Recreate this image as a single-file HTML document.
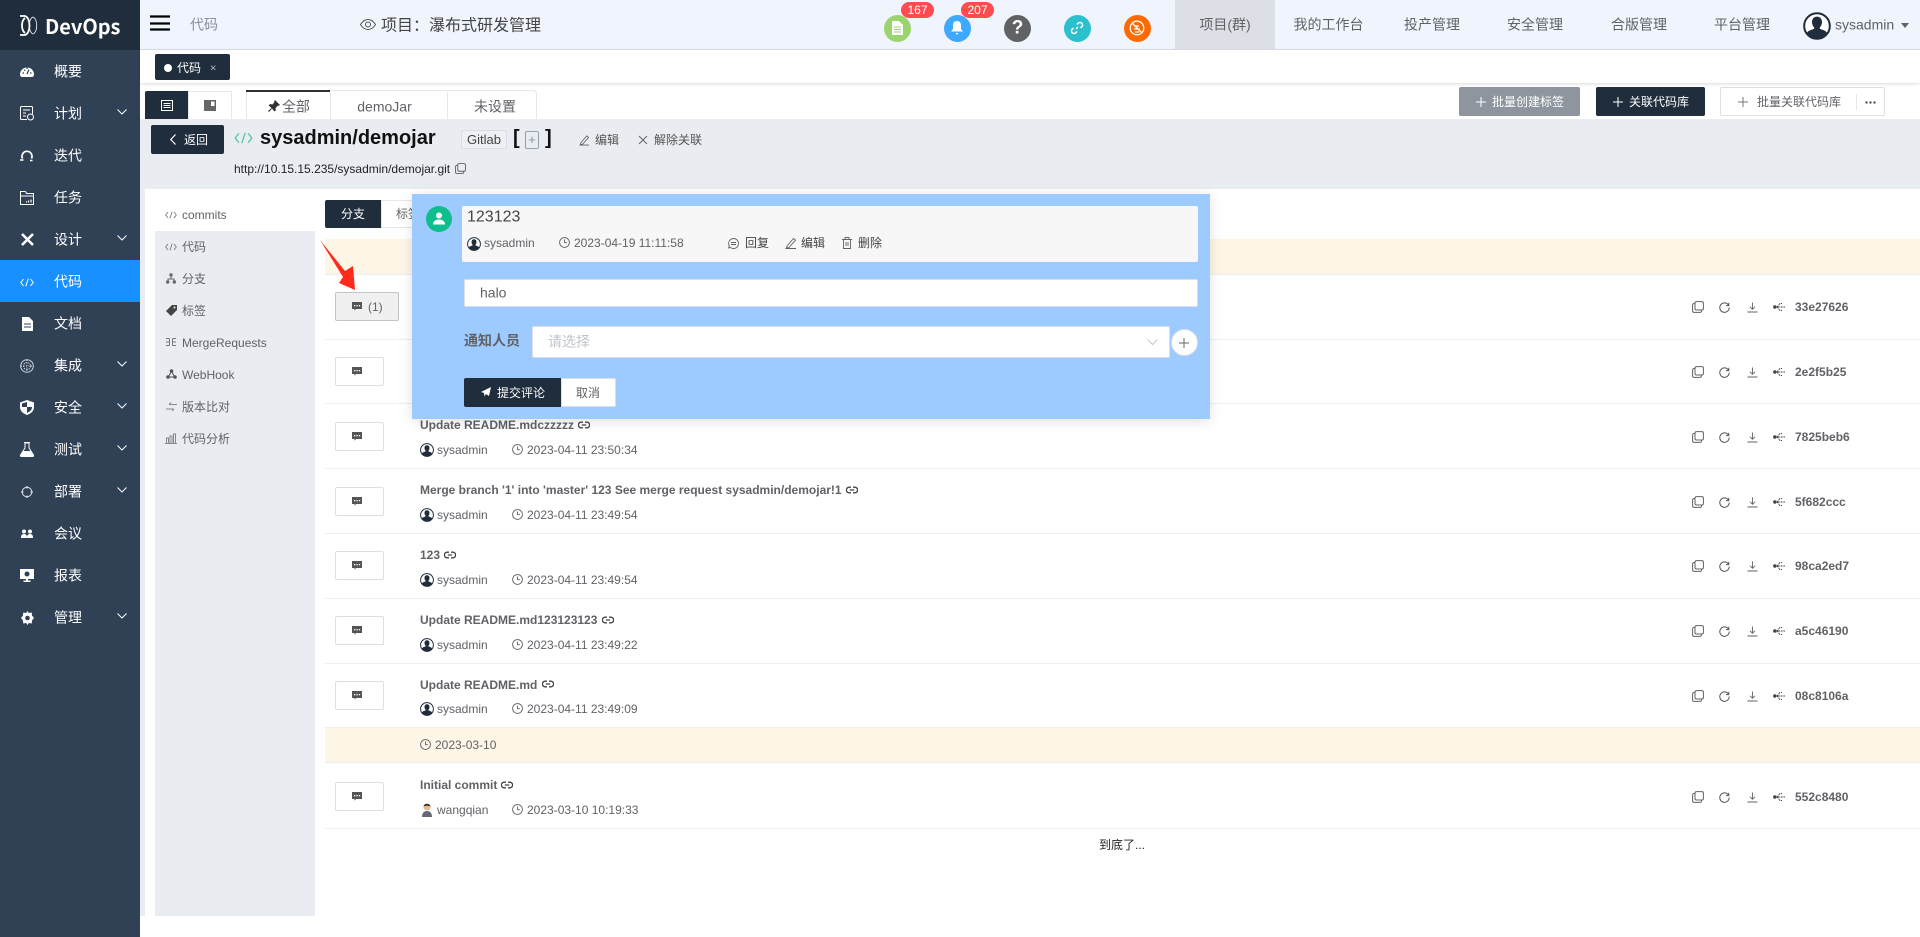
<!DOCTYPE html>
<html lang="zh"><head><meta charset="utf-8"><title>DevOps</title>
<style>
*{box-sizing:border-box}
html,body{margin:0;padding:0;width:1920px;height:937px;overflow:hidden;background:#fff;font-family:"Liberation Sans","Noto Sans CJK SC",sans-serif;font-size:12px;color:#606266}
.a{position:absolute}
.t{position:absolute;white-space:nowrap;transform:translateY(-50%);line-height:1.2}
.c{transform:translate(-50%,-50%);text-align:center}
svg{position:absolute;overflow:visible}
.n{color:#fff;font-size:14px;left:54px}
.m{color:#606266;font-size:12px;left:182px}
.b{font-weight:bold;color:#606266;font-size:12px}
.nav{font-size:14px;color:#606266}
.cb{position:absolute;left:335px;width:49px;height:29px;background:#fff;border:1px solid #dcdfe6;border-radius:2px}
.line{position:absolute;left:325px;width:1595px;height:1px;background:#ebeef5}
.badge{position:absolute;height:16px;border-radius:8px;background:#ff4d4f;color:#fff;font-size:12px;text-align:center;line-height:16px;top:2px;width:33px}
.circ{position:absolute;width:27px;height:27px;border-radius:50%;top:15px}
</style></head><body>
<svg width="0" height="0" style="position:absolute">
<defs>
<symbol id="av" viewBox="0 0 14 14"><circle cx="7" cy="7" r="6.400" fill="#fff" stroke="#1f2d3d" stroke-width="1"/><path d="M7 2.300c1.500 0 2.500 1.100 2.500 2.700 0 1.100-.5 2.200-1.100 2.700v.7c1.100.5 3 .8 3.700 2.100A6.400 6.400 0 0 1 7 13.500a6.400 6.400 0 0 1-5.100-3c.7-1.300 2.600-1.600 3.700-2.100v-.7c-.6-.5-1.100-1.600-1.100-2.700 0-1.600 1-2.700 2.500-2.700z" fill="#1f2d3d"/></symbol>
<symbol id="ck" viewBox="0 0 11 11"><circle cx="5.500" cy="5.500" r="4.900" fill="none" stroke="#606266" stroke-width=".9"/><path d="M5.500 2.500v3.200h2.400" fill="none" stroke="#606266" stroke-width=".9"/></symbol>
<symbol id="lk" viewBox="0 0 12 8"><path d="M5 1.200H3.200a2.800 2.800 0 0 0 0 5.600H5M7 1.200h1.800a2.800 2.800 0 0 1 0 5.600H7M3.800 4h4.400" fill="none" stroke="#444" stroke-width="1.300"/></symbol>
<symbol id="cm" viewBox="0 0 10 9"><path d="M0 0h10v7H4L2.500 8.800V7H0z" fill="#555"/><rect x="2" y="3" width="1.300" height="1.300" fill="#fff"/><rect x="4.400" y="3" width="1.300" height="1.300" fill="#fff"/><rect x="6.800" y="3" width="1.300" height="1.300" fill="#fff"/></symbol>
<symbol id="cp" viewBox="0 0 12 12"><rect x="3" y=".6" width="8.400" height="8.400" rx="1.500" fill="none" stroke="#606266"/><path d="M3 2.500H2A1.400 1.400 0 0 0 .6 4v6A1.400 1.400 0 0 0 2 11.400h6A1.400 1.400 0 0 0 9.500 10V9" fill="none" stroke="#606266"/></symbol>
<symbol id="rf" viewBox="0 0 11 11"><path d="M9.400 3A4.700 4.700 0 1 0 10.200 5.500" fill="none" stroke="#555" stroke-width="1"/><path d="M9.800.8v2.800H7" fill="none" stroke="#555" stroke-width="1"/></symbol>
<symbol id="dl" viewBox="0 0 11 11"><path d="M5.500.5v6.500M3 4.800 5.500 7.300 8 4.800M.5 10h10" fill="none" stroke="#606266" stroke-width=".9"/></symbol>
<symbol id="tr" viewBox="0 0 12 10"><circle cx="1.800" cy="5" r="1.700" fill="#444"/><path d="M2 5h10M4 5l3-3.500h2M4 5l3 3.500h2" fill="none" stroke="#444" stroke-width=".9" stroke-dasharray="2 .8"/></symbol>
<symbol id="pen" viewBox="0 0 12 12"><path d="M2 9 8.500 1.500l2 1.700L4 10.500l-2.500.5zM.5 11.500H11" fill="none" stroke="#606266" stroke-width=".9"/></symbol>
<symbol id="code" viewBox="0 0 14 9"><path d="M3.500 1 .8 4.500l2.700 3.500M10.500 1l2.700 3.500-2.700 3.500M8.300 .6 5.700 8.400" fill="none" stroke="currentColor" stroke-width="1"/></symbol>
<symbol id="chev" viewBox="0 0 10 6"><path d="M.5.500 5 5 9.500.5" fill="none" stroke="#fff" stroke-width="1"/></symbol>
</defs></svg>

<!-- sidebar -->
<div class="a" style="left:0;top:0;width:140px;height:937px;background:#304156"></div>
<div class="a" style="left:0;top:0;width:140px;height:50px;background:#1f2d3d"></div>
<svg style="left:20px;top:15px" width="18" height="21" viewBox="0 0 18 21"><path d="M0 1h5c6 2 6 17 0 19H0M5 3c-4 3-4 12 0 15" fill="none" stroke="#fff" stroke-width="1.800"/><path d="M13 2c5 2 5 15 0 17M13 2C8 4 8 17 13 19" fill="none" stroke="#fff" stroke-width=".8"/></svg>
<div class="t" style="left:45px;top:26px;color:#fff;font-size:20px;font-weight:bold;font-family:'Noto Sans CJK SC','Liberation Sans',sans-serif">DevOps</div>
<div class="a" style="left:0;top:260px;width:140px;height:42px;background:#1890ff"></div>
<div class="t n" style="top:72px">概要</div><div class="t n" style="top:114px">计划</div><div class="t n" style="top:156px">迭代</div><div class="t n" style="top:198px">任务</div><div class="t n" style="top:240px">设计</div><div class="t n" style="top:282px">代码</div><div class="t n" style="top:324px">文档</div><div class="t n" style="top:366px">集成</div><div class="t n" style="top:408px">安全</div><div class="t n" style="top:450px">测试</div><div class="t n" style="top:492px">部署</div><div class="t n" style="top:534px">会议</div><div class="t n" style="top:576px">报表</div><div class="t n" style="top:618px">管理</div>
<svg style="left:117px;top:109px" width="10" height="6"><use href="#chev"/></svg>
<svg style="left:117px;top:235px" width="10" height="6"><use href="#chev"/></svg>
<svg style="left:117px;top:361px" width="10" height="6"><use href="#chev"/></svg>
<svg style="left:117px;top:403px" width="10" height="6"><use href="#chev"/></svg>
<svg style="left:117px;top:445px" width="10" height="6"><use href="#chev"/></svg>
<svg style="left:117px;top:487px" width="10" height="6"><use href="#chev"/></svg>
<svg style="left:117px;top:613px" width="10" height="6"><use href="#chev"/></svg>
<svg style="left:20px;top:66px" width="14" height="11" viewBox="0 0 14 11"><path d="M0 8.500a7 7 0 1 1 14 0c0 1.500-1 2.500-2 2.500H2C1 11 0 10 0 8.500z" fill="#fff"/><path d="M7 8 9 3.500M2.500 7h1.500M10 7h1.500M4.300 3.700l1 1M7 1.500v1.500" stroke="#304156" stroke-width="1.200"/></svg>
<svg style="left:20px;top:106px" width="14" height="15" viewBox="0 0 14 15" fill="none" stroke="#fff"><path d="M7 13.500H1.500a1 1 0 0 1-1-1v-11a1 1 0 0 1 1-1h10a1 1 0 0 1 1 1V8"/><path d="M3 4h7M3 7h3M3 10h3"/><circle cx="10.500" cy="11" r="3" stroke="#fff" fill="#304156"/></svg>
<svg style="left:20px;top:149px" width="14" height="13" viewBox="0 0 14 13" fill="none" stroke="#fff" stroke-width="1.700"><path d="M2.500 9.500a5 5 0 1 1 9 0"/><path d="M0 11h3.500M10 11.500h2.500" stroke-width="1.500"/></svg>
<svg style="left:20px;top:191px" width="14" height="14" viewBox="0 0 14 14" fill="none" stroke="#fff"><path d="M.5.500h5l1 2h7v11H.5z M.5 5h13"/><path d="M6 11h1M8.500 9.500v2M11 8.500v3" stroke-width="1.200"/></svg>
<svg style="left:21px;top:233px" width="13" height="13" viewBox="0 0 13 13"><path d="M1 1 12 12M12 1 1 12" stroke="#fff" stroke-width="2.600"/></svg>
<svg style="left:20px;top:278px;color:#fff" width="14" height="9"><use href="#code"/></svg>
<svg style="left:22px;top:317px" width="11" height="14" viewBox="0 0 11 14"><path d="M0 0h7l4 4v10H0z" fill="#fff"/><path d="M2 7h7M2 10h7" stroke="#304156"/></svg>
<svg style="left:20px;top:359px" width="14" height="14" viewBox="0 0 14 14" fill="none" stroke="#cfd6de"><circle cx="7" cy="7" r="6.300"/><circle cx="7" cy="7" r="3.500" stroke-dasharray="1.500 1"/><path d="M1 7h12M7 1v12" stroke-dasharray="1 1.500"/></svg>
<svg style="left:20px;top:400px" width="14" height="15" viewBox="0 0 14 15"><path d="M7 0 14 2.500V7c0 4-3 6.500-7 8C3 13.500 0 11 0 7V2.500z" fill="#fff"/><path d="M7 2v5h5c0 3-2 4.500-5 6V7H2V3.500z" fill="#304156"/></svg>
<svg style="left:20px;top:442px" width="14" height="15" viewBox="0 0 14 15"><path d="M4 .5h6M5 1v5l-4.500 7c-.4.800 0 1.500 1 1.500h11c1 0 1.400-.7 1-1.500L9 6V1z" fill="none" stroke="#fff" stroke-width="1"/><path d="M3.500 9h7l3 5H.5z" fill="#fff"/></svg>
<svg style="left:21px;top:486px" width="12" height="12" viewBox="0 0 12 12" fill="none" stroke="#d5dae0"><circle cx="6" cy="6" r="4.800"/><path d="M6 0v2.500M6 9.500V12M0 6h2.500M9.500 6H12" stroke-width="1.300"/></svg>
<svg style="left:21px;top:529px" width="12" height="10" viewBox="0 0 12 10"><circle cx="3" cy="2.500" r="2" fill="#fff"/><circle cx="9" cy="2.500" r="2" fill="#fff"/><path d="M0 9c0-3 1-4 3-4s3 1 3 4zM6 9c0-3 1-4 3-4s3 1 3 4z" fill="#fff"/></svg>
<svg style="left:20px;top:569px" width="14" height="13" viewBox="0 0 14 13"><path d="M0 0h14v10H8v1.500h2.500V13h-7v-1.500H6V10H0z" fill="#fff"/><circle cx="7" cy="5" r="2.500" fill="#304156"/></svg>
<svg style="left:21px;top:611px" width="13" height="14" viewBox="0 0 13 14"><path d="M6.500 0 7.800 2 10.800 1.500 11 4.500 13 7 11 9.500 10.800 12.500 7.800 12 6.500 14 5.200 12 2.200 12.500 2 9.500 0 7 2 4.500 2.200 1.500 5.200 2z" fill="#fff"/><circle cx="6.500" cy="7" r="2.300" fill="#304156"/></svg>

<!-- header -->
<div class="a" style="left:140px;top:0;width:1780px;height:50px;background:#f0f4fd;border-bottom:1px solid #dcdfe6"></div>
<svg style="left:150px;top:15px" width="20" height="16"><path d="M0 1.500h20M0 8.500h20M0 14.500h20" stroke="#000" stroke-width="2.200"/></svg>
<div class="t" style="left:190px;top:25px;font-size:14px;color:#8a8f99">代码</div>
<svg style="left:360px;top:19px" width="16" height="11" viewBox="0 0 16 11" fill="none" stroke="#555"><path d="M.5 5.500C3 1.500 5.500.5 8 .5s5 1 7.500 5c-2.500 4-5 5-7.500 5s-5-1-7.500-5z"/><circle cx="8" cy="5.500" r="2.500"/></svg>
<div class="t" style="left:381px;top:25.500px;font-size:16px;color:#444">项目：瀑布式研发管理</div>
<div class="circ" style="left:884px;background:#9ad46e"></div>
<svg style="left:892px;top:21px" width="11" height="14" viewBox="0 0 11 14"><path d="M0 0h7l4 4v10H0z" fill="#fff"/><path d="M2 6h7M2 8.500h7M2 11h7" stroke="#9ad46e"/></svg>
<div class="circ" style="left:944px;background:#3fa9ff"></div>
<svg style="left:951px;top:21px" width="12" height="14" viewBox="0 0 12 14"><path d="M6 0c3 0 4 2 4 5v3l2 2.500H0L2 8V5c0-3 1-5 4-5zM4.500 12h3l-1.500 2z" fill="#fff"/></svg>
<div class="circ" style="left:1004px;background:#606266"></div>
<div class="t c" style="left:1017.500px;top:28.500px;color:#fff;font-size:19px;font-weight:bold">?</div>
<div class="circ" style="left:1064px;background:#2cc0cf"></div>
<svg style="left:1070px;top:21px" width="14" height="14" viewBox="0 0 14 14" fill="none" stroke="#fff" stroke-width="1.500"><path d="M6 8 8 6M7 3.500l1.500-1.500a2.500 2.500 0 0 1 3.500 3.500L10.500 7M7 10.500 5.500 12A2.500 2.500 0 0 1 2 8.500L3.500 7"/></svg>
<div class="circ" style="left:1124px;background:#ff6a00"></div>
<svg style="left:1129px;top:20px" width="16" height="16" viewBox="0 0 16 16" fill="none" stroke="#fff" stroke-width="1.300"><circle cx="8" cy="8" r="6.800"/><path d="M3 3l10 10M6 6h4M5 9h6M6 12h4"/></svg>
<div class="badge" style="left:901px">167</div><div class="badge" style="left:961px">207</div>
<div class="a" style="left:1175px;top:0;width:100px;height:49px;background:#dcdfe6"></div>
<div class="t c nav" style="left:1225px;top:25px;font-size:14px">项目(群)</div>
<div class="t c nav" style="left:1328.500px;top:25px">我的工作台</div>
<div class="t c nav" style="left:1432px;top:25px">投产管理</div>
<div class="t c nav" style="left:1535px;top:25px">安全管理</div>
<div class="t c nav" style="left:1639px;top:25px">合版管理</div>
<div class="t c nav" style="left:1742px;top:25px">平台管理</div>
<svg style="left:1803px;top:12px" width="28" height="28"><use href="#av"/></svg>
<div class="t" style="left:1835px;top:25px;font-size:14px;color:#606266">sysadmin</div>
<svg style="left:1901px;top:23px" width="8" height="5"><path d="M0 0h8L4 5z" fill="#606266"/></svg>

<!-- tag bar -->
<div class="a" style="left:140px;top:50px;width:1780px;height:33px;background:#fff;box-shadow:0 1px 3px rgba(0,0,0,.15)"></div>
<div class="a" style="left:155px;top:54px;width:75px;height:26px;background:#1f2d3d;border-radius:2px"></div>
<div class="a" style="left:164px;top:64px;width:8px;height:8px;border-radius:50%;background:#fff"></div>
<div class="t" style="left:177px;top:68px;color:#fff;font-size:12px">代码</div>
<div class="t" style="left:210px;top:69px;color:#bbb;font-size:11px">×</div>

<!-- toggle & tabs -->
<div class="a" style="left:145px;top:91px;width:43px;height:28px;background:#1f2d3d;border-radius:2px 0 0 0"></div>
<svg style="left:161px;top:100px" width="12" height="11" viewBox="0 0 12 11" fill="none" stroke="#fff"><rect x=".5" y=".5" width="11" height="10"/><path d="M2.500 3.500h7M2.500 5.500h7M2.500 7.500h7"/></svg>
<div class="a" style="left:188px;top:91px;width:44px;height:28px;background:#fff;border:1px solid #e4e7ed;border-bottom:0"></div>
<svg style="left:204px;top:100px" width="12" height="11" viewBox="0 0 12 11"><rect width="12" height="11" fill="#666"/><rect x="1.500" y="1.500" width="4" height="8" fill="#666"/><rect x="7" y="1.500" width="3.500" height="4.500" fill="#fff"/></svg>
<div class="a" style="left:246px;top:90px;width:291px;height:29px;background:#fff;border:1px solid #e4e7ed;border-bottom:0;border-radius:2px 4px 0 0"></div>
<div class="a" style="left:246px;top:90px;width:84px;height:2px;background:#303133"></div>
<div class="a" style="left:330px;top:92px;width:1px;height:27px;background:#e4e7ed"></div>
<div class="a" style="left:447px;top:92px;width:1px;height:27px;background:#e4e7ed"></div>
<svg style="left:268px;top:100px" width="12" height="12" viewBox="0 0 12 12"><path d="M7 0l5 5-1 .8-1-.3L7.500 8 7.800 10.500 6.500 11.500 4 8.500 1 12 0 11l3.500-3L.7 5.500 2 4l2.500.5L6.500 2 6.200 1z" fill="#303133"/></svg>
<div class="t" style="left:282px;top:107px;font-size:14px;color:#606266">全部</div>
<div class="t c" style="left:384.500px;top:107px;font-size:14px;color:#606266">demoJar</div>
<div class="t c" style="left:495px;top:107px;font-size:14px;color:#606266">未设置</div>

<!-- top right buttons -->
<div class="a" style="left:1459px;top:87px;width:121px;height:29px;background:#8f959e;border-radius:2px"></div>
<svg style="left:1476px;top:97px" width="10" height="10"><path d="M5 0v10M0 5h10" stroke="#fff"/></svg>
<div class="t" style="left:1492px;top:102px;color:#fff;font-size:12px">批量创建标签</div>
<div class="a" style="left:1596px;top:87px;width:109px;height:29px;background:#1f2d3d;border-radius:2px"></div>
<svg style="left:1613px;top:97px" width="10" height="10"><path d="M5 0v10M0 5h10" stroke="#fff"/></svg>
<div class="t" style="left:1629px;top:102px;color:#fff;font-size:12px">关联代码库</div>
<div class="a" style="left:1720px;top:87px;width:165px;height:29px;background:#fff;border:1px solid #dcdfe6;border-radius:2px"></div>
<svg style="left:1738px;top:97px" width="10" height="10"><path d="M5 0v10M0 5h10" stroke="#777"/></svg>
<div class="t" style="left:1757px;top:102px;color:#606266;font-size:12px">批量关联代码库</div>
<div class="a" style="left:1856px;top:94px;width:1px;height:16px;background:#e4e7ed"></div>
<svg style="left:1865px;top:101px" width="11" height="3"><circle cx="1.500" cy="1.500" r="1.200" fill="#555"/><circle cx="5.500" cy="1.500" r="1.200" fill="#555"/><circle cx="9.500" cy="1.500" r="1.200" fill="#555"/></svg>

<!-- gray -->
<div class="a" style="left:140px;top:119px;width:1780px;height:70px;background:#e9ecf1"></div>
<div class="a" style="left:140px;top:189px;width:5px;height:727px;background:#e9ecf1"></div>
<div class="a" style="left:151px;top:125px;width:73px;height:29px;background:#1f2d3d;border-radius:2px"></div>
<svg style="left:170px;top:134px" width="6" height="11"><path d="M5.500.5.800 5.500 5.500 10.500" fill="none" stroke="#fff" stroke-width="1.200"/></svg>
<div class="t" style="left:184px;top:140px;color:#fff;font-size:12px">返回</div>
<svg style="left:234px;top:132px;color:#5cc8a0" width="19" height="12"><use href="#code"/></svg>
<div class="t" style="left:260px;top:138px;font-size:20px;font-weight:bold;color:#111">sysadmin/demojar</div>
<div class="a" style="left:461px;top:130px;width:46px;height:19px;background:#eef0f3;border:1px solid #d9dce2;border-radius:2px"></div>
<div class="t c" style="left:484px;top:140px;font-size:13px;color:#444">Gitlab</div>
<div class="t" style="left:513px;top:138px;font-size:20px;font-weight:bold;color:#111">[</div>
<div class="a" style="left:525px;top:131px;width:14px;height:18px;border:1px solid #9aa0aa;border-radius:2px"></div>
<div class="t c" style="left:532px;top:140px;font-size:13px;color:#8a93a0">+</div>
<div class="t" style="left:545px;top:138px;font-size:20px;font-weight:bold;color:#111">]</div>
<svg style="left:579px;top:134px" width="11" height="12"><use href="#pen"/></svg>
<div class="t" style="left:595px;top:140px;font-size:12px;color:#555">编辑</div>
<svg style="left:639px;top:136px" width="8" height="8"><path d="M0 0l8 8M8 0 0 8" stroke="#666"/></svg>
<div class="t" style="left:654px;top:140px;font-size:12px;color:#555">解除关联</div>
<div class="t" style="left:234px;top:169px;font-size:12px;color:#222">http://10.15.15.235/sysadmin/demojar.git</div>
<svg style="left:455px;top:163px" width="11" height="11"><use href="#cp"/></svg>

<!-- left menu -->
<div class="a" style="left:155px;top:231px;width:160px;height:685px;background:#e9ecf1"></div>
<svg style="left:165px;top:211px;color:#777" width="12" height="8"><use href="#code"/></svg>
<div class="t m" style="top:215px">commits</div>
<svg style="left:165px;top:243px;color:#777" width="12" height="8"><use href="#code"/></svg>
<div class="t m" style="top:247px">代码</div>
<svg style="left:166px;top:273px" width="10" height="11" viewBox="0 0 10 11"><circle cx="5" cy="2" r="1.700" fill="#666"/><circle cx="1.700" cy="9" r="1.700" fill="#666"/><circle cx="8.300" cy="9" r="1.700" fill="#666"/><path d="M5 3v3M2 8V6h6v2" stroke="#666" fill="none"/></svg>
<div class="t m" style="top:279px">分支</div>
<svg style="left:166px;top:305px" width="11" height="11" viewBox="0 0 11 11"><path d="M0 6 6 0h5v5l-6 6z" fill="#444"/><circle cx="8.500" cy="2.500" r="1" fill="#e9ecf1"/></svg>
<div class="t m" style="top:311px">标签</div>
<svg style="left:166px;top:337px" width="10" height="10" viewBox="0 0 10 10" fill="none" stroke="#777"><path d="M0 1.500h3.500M0 5h3.500M0 8.500h3.500M6.500 1.500H10M6.500 5H10M6.500 8.500H10M3.500 1.500v7M6.500 1.500v7"/></svg>
<div class="t m" style="top:343px">MergeRequests</div>
<svg style="left:166px;top:369px" width="11" height="10" viewBox="0 0 11 10"><circle cx="5.500" cy="2" r="1.800" fill="#555"/><circle cx="2" cy="8" r="1.800" fill="#555"/><circle cx="9" cy="8" r="1.800" fill="#555"/><path d="M5 3 3 7M6 3l2 4M3 8h5" stroke="#555" fill="none"/></svg>
<div class="t m" style="top:375px">WebHook</div>
<svg style="left:166px;top:402px" width="11" height="10" viewBox="0 0 11 10" fill="none" stroke="#888"><path d="M11 2.500H3M3 2.500 5 .5M0 7h8M8 7 6 9"/></svg>
<div class="t m" style="top:407px">版本比对</div>
<svg style="left:165px;top:433px" width="12" height="11" viewBox="0 0 12 11" fill="none" stroke="#888"><path d="M0 10.500h12M1.500 10V5h2v5M5 10V3h2v7M8.500 10V1h2v9"/></svg>
<div class="t m" style="top:439px">代码分析</div>

<!-- branch tabs -->
<div class="a" style="left:325px;top:200px;width:56px;height:28px;background:#1f2d3d;border-radius:2px 0 0 2px"></div>
<div class="t c" style="left:353px;top:214px;color:#fff;font-size:12px">分支</div>
<div class="a" style="left:381px;top:200px;width:60px;height:28px;background:#fff;border:1px solid #e4e7ed"></div>
<div class="t" style="left:396px;top:214px;color:#666;font-size:12px">标签</div>

<!-- list -->
<div class="a" style="left:325px;top:239px;width:1595px;height:35px;background:#fdf5e6"></div>
<div class="line" style="top:274px"></div>
<div class="cb" style="top:292px;width:64px;background:#f0f0f0;border-color:#c4c4c4"></div>
<svg style="left:352px;top:302px" width="10" height="9"><use href="#cm"/></svg>
<div class="t" style="left:368px;top:307px;color:#606266;font-size:12px">(1)</div>
<div class="line" style="top:339px"></div>

<div class="cb" style="top:357px"></div><svg style="left:352px;top:367px" width="10" height="9"><use href="#cm"/></svg>
<div class="line" style="top:403px"></div>

<div class="cb" style="top:422px"></div><svg style="left:352px;top:432px" width="10" height="9"><use href="#cm"/></svg>
<div class="t b" style="left:420px;top:425px">Update README.mdczzzzz</div>
<svg style="left:578px;top:421px" width="12" height="8"><use href="#lk"/></svg>
<svg style="left:420px;top:443px" width="14" height="14"><use href="#av"/></svg><div class="t" style="left:437px;top:450px">sysadmin</div>
<svg style="left:512px;top:444px" width="11" height="11"><use href="#ck"/></svg><div class="t" style="left:527px;top:450px">2023-04-11 23:50:34</div>
<div class="line" style="top:468px"></div>

<div class="cb" style="top:487px"></div><svg style="left:352px;top:497px" width="10" height="9"><use href="#cm"/></svg>
<div class="t b" style="left:420px;top:490px">Merge branch '1' into 'master' 123 See merge request sysadmin/demojar!1</div>
<svg style="left:846px;top:486px" width="12" height="8"><use href="#lk"/></svg>
<svg style="left:420px;top:508px" width="14" height="14"><use href="#av"/></svg><div class="t" style="left:437px;top:515px">sysadmin</div>
<svg style="left:512px;top:509px" width="11" height="11"><use href="#ck"/></svg><div class="t" style="left:527px;top:515px">2023-04-11 23:49:54</div>
<div class="line" style="top:533px"></div>

<div class="cb" style="top:551px"></div><svg style="left:352px;top:561px" width="10" height="9"><use href="#cm"/></svg>
<div class="t b" style="left:420px;top:555px">123</div>
<svg style="left:444px;top:551px" width="12" height="8"><use href="#lk"/></svg>
<svg style="left:420px;top:573px" width="14" height="14"><use href="#av"/></svg><div class="t" style="left:437px;top:580px">sysadmin</div>
<svg style="left:512px;top:574px" width="11" height="11"><use href="#ck"/></svg><div class="t" style="left:527px;top:580px">2023-04-11 23:49:54</div>
<div class="line" style="top:598px"></div>

<div class="cb" style="top:616px"></div><svg style="left:352px;top:626px" width="10" height="9"><use href="#cm"/></svg>
<div class="t b" style="left:420px;top:620px">Update README.md123123123</div>
<svg style="left:602px;top:616px" width="12" height="8"><use href="#lk"/></svg>
<svg style="left:420px;top:638px" width="14" height="14"><use href="#av"/></svg><div class="t" style="left:437px;top:645px">sysadmin</div>
<svg style="left:512px;top:639px" width="11" height="11"><use href="#ck"/></svg><div class="t" style="left:527px;top:645px">2023-04-11 23:49:22</div>
<div class="line" style="top:663px"></div>

<div class="cb" style="top:681px"></div><svg style="left:352px;top:691px" width="10" height="9"><use href="#cm"/></svg>
<div class="t b" style="left:420px;top:685px">Update README.md</div>
<svg style="left:542px;top:680px" width="12" height="8"><use href="#lk"/></svg>
<svg style="left:420px;top:702px" width="14" height="14"><use href="#av"/></svg><div class="t" style="left:437px;top:709px">sysadmin</div>
<svg style="left:512px;top:703px" width="11" height="11"><use href="#ck"/></svg><div class="t" style="left:527px;top:709px">2023-04-11 23:49:09</div>

<div class="a" style="left:325px;top:727px;width:1595px;height:36px;background:#fdf5e6;border-top:1px solid #ebeef5;border-bottom:1px solid #ebeef5"></div>
<svg style="left:420px;top:739px" width="11" height="11"><use href="#ck"/></svg><div class="t" style="left:435px;top:745px">2023-03-10</div>

<div class="cb" style="top:782px"></div><svg style="left:352px;top:792px" width="10" height="9"><use href="#cm"/></svg>
<div class="t b" style="left:420px;top:785px">Initial commit</div>
<svg style="left:501px;top:781px" width="12" height="8"><use href="#lk"/></svg>
<svg style="left:420px;top:803px" width="14" height="15" viewBox="0 0 14 15"><circle cx="7" cy="4" r="3.500" fill="#e8b98f"/><path d="M3.500 3.500C4 0 10 0 10.500 3.500 8 2.500 6 2.500 3.500 3.500z" fill="#333"/><path d="M2 14c0-4 2-6 5-6s5 2 5 6z" fill="#667"/></svg>
<div class="t" style="left:437px;top:810px">wangqian</div>
<svg style="left:512px;top:804px" width="11" height="11"><use href="#ck"/></svg><div class="t" style="left:527px;top:810px">2023-03-10 10:19:33</div>
<div class="line" style="top:828px"></div>
<div class="t c" style="left:1122px;top:845px;color:#222;font-size:12px">到底了...</div>

<!-- right icons -->
<svg style="left:1692px;top:301px" width="12" height="12"><use href="#cp"/></svg><svg style="left:1719px;top:302px" width="11" height="11"><use href="#rf"/></svg><svg style="left:1747px;top:302px" width="11" height="11"><use href="#dl"/></svg><svg style="left:1773px;top:302px" width="12" height="10"><use href="#tr"/></svg><div class="t b" style="left:1795px;top:307px">33e27626</div>
<svg style="left:1692px;top:366px" width="12" height="12"><use href="#cp"/></svg><svg style="left:1719px;top:367px" width="11" height="11"><use href="#rf"/></svg><svg style="left:1747px;top:367px" width="11" height="11"><use href="#dl"/></svg><svg style="left:1773px;top:367px" width="12" height="10"><use href="#tr"/></svg><div class="t b" style="left:1795px;top:372px">2e2f5b25</div>
<svg style="left:1692px;top:431px" width="12" height="12"><use href="#cp"/></svg><svg style="left:1719px;top:432px" width="11" height="11"><use href="#rf"/></svg><svg style="left:1747px;top:432px" width="11" height="11"><use href="#dl"/></svg><svg style="left:1773px;top:432px" width="12" height="10"><use href="#tr"/></svg><div class="t b" style="left:1795px;top:437px">7825beb6</div>
<svg style="left:1692px;top:496px" width="12" height="12"><use href="#cp"/></svg><svg style="left:1719px;top:497px" width="11" height="11"><use href="#rf"/></svg><svg style="left:1747px;top:497px" width="11" height="11"><use href="#dl"/></svg><svg style="left:1773px;top:497px" width="12" height="10"><use href="#tr"/></svg><div class="t b" style="left:1795px;top:502px">5f682ccc</div>
<svg style="left:1692px;top:560px" width="12" height="12"><use href="#cp"/></svg><svg style="left:1719px;top:561px" width="11" height="11"><use href="#rf"/></svg><svg style="left:1747px;top:561px" width="11" height="11"><use href="#dl"/></svg><svg style="left:1773px;top:561px" width="12" height="10"><use href="#tr"/></svg><div class="t b" style="left:1795px;top:566px">98ca2ed7</div>
<svg style="left:1692px;top:625px" width="12" height="12"><use href="#cp"/></svg><svg style="left:1719px;top:626px" width="11" height="11"><use href="#rf"/></svg><svg style="left:1747px;top:626px" width="11" height="11"><use href="#dl"/></svg><svg style="left:1773px;top:626px" width="12" height="10"><use href="#tr"/></svg><div class="t b" style="left:1795px;top:631px">a5c46190</div>
<svg style="left:1692px;top:690px" width="12" height="12"><use href="#cp"/></svg><svg style="left:1719px;top:691px" width="11" height="11"><use href="#rf"/></svg><svg style="left:1747px;top:691px" width="11" height="11"><use href="#dl"/></svg><svg style="left:1773px;top:691px" width="12" height="10"><use href="#tr"/></svg><div class="t b" style="left:1795px;top:696px">08c8106a</div>
<svg style="left:1692px;top:791px" width="12" height="12"><use href="#cp"/></svg><svg style="left:1719px;top:792px" width="11" height="11"><use href="#rf"/></svg><svg style="left:1747px;top:792px" width="11" height="11"><use href="#dl"/></svg><svg style="left:1773px;top:792px" width="12" height="10"><use href="#tr"/></svg><div class="t b" style="left:1795px;top:797px">552c8480</div>

<!-- arrow -->
<svg style="left:318px;top:238px" width="40" height="54" viewBox="0 0 40 54"><path d="M2 2 27 33 35 28 37 52 21 45 25 39 z" fill="#ff2a1a"/></svg>

<!-- modal -->
<div class="a" style="left:412px;top:194px;width:798px;height:225px;background:#9ecbff;box-shadow:0 2px 12px rgba(0,0,0,.12)"></div>
<div class="a" style="left:426px;top:206px;width:26px;height:26px;border-radius:50%;background:#0fbe8c"></div>
<svg style="left:433px;top:212px" width="12" height="13" viewBox="0 0 12 13"><circle cx="6" cy="3.500" r="3" fill="#fff"/><path d="M0 12.500C0 9 3 7.500 6 7.500s6 1.500 6 5z" fill="#fff"/></svg>
<div class="a" style="left:462px;top:206px;width:736px;height:56px;background:#f7f7f7;border-radius:2px"></div>
<div class="t" style="left:467px;top:217px;font-size:16px;color:#444">123123</div>
<svg style="left:467px;top:237px" width="14" height="14"><use href="#av"/></svg>
<div class="t" style="left:484px;top:243px;color:#606266">sysadmin</div>
<svg style="left:559px;top:237px" width="11" height="11"><use href="#ck"/></svg>
<div class="t" style="left:574px;top:243px;color:#606266">2023-04-19 11:11:58</div>
<svg style="left:728px;top:238px" width="11" height="11" viewBox="0 0 11 11" fill="none" stroke="#606266"><path d="M5.500.5a5 5 0 1 1-3 9L.5 10l.8-2A5 5 0 0 1 5.500.5zM3 4.500h5M3 6.500h5" stroke-width=".9"/></svg>
<div class="t" style="left:745px;top:243px;color:#444">回复</div>
<svg style="left:785px;top:237px" width="12" height="12"><use href="#pen"/></svg>
<div class="t" style="left:801px;top:243px;color:#444">编辑</div>
<svg style="left:842px;top:237px" width="10" height="12" viewBox="0 0 10 12" fill="none" stroke="#606266"><path d="M0 2.500h10M3 2.500V.5h4v2M1.500 2.500v9h7v-9M4 5v4M6 5v4" stroke-width=".9"/></svg>
<div class="t" style="left:858px;top:243px;color:#444">删除</div>
<div class="a" style="left:464px;top:279px;width:734px;height:28px;background:#fff;border:1px solid #dcdfe6;border-radius:2px"></div>
<div class="t" style="left:480px;top:293px;font-size:14px;color:#606266">halo</div>
<div class="t" style="left:464px;top:341px;font-size:14px;font-weight:bold;color:#606266">通知人员</div>
<div class="a" style="left:532px;top:326px;width:638px;height:32px;background:#fff;border:1px solid #dcdfe6;border-radius:2px"></div>
<div class="t" style="left:548px;top:342px;font-size:14px;color:#c0c4cc">请选择</div>
<svg style="left:1147px;top:339px" width="11" height="6"><path d="M.5.500 5.500 5.500 10.500.5" fill="none" stroke="#c0c4cc"/></svg>
<div class="a" style="left:1171px;top:329px;width:27px;height:27px;border-radius:50%;background:#fff;border:1px solid #dcdfe6"></div>
<svg style="left:1179px;top:337.500px" width="10" height="10"><path d="M5 0v10M0 5h10" stroke="#666"/></svg>
<div class="a" style="left:464px;top:378px;width:97px;height:29px;background:#1f2d3d;border-radius:2px 0 0 2px"></div>
<svg style="left:481px;top:387px" width="10" height="10" viewBox="0 0 10 10"><path d="M10 0 8 9 5 7 3.500 9.500 3 6zM10 0 0 5l3 1z" fill="#fff"/></svg>
<div class="t" style="left:497px;top:393px;color:#fff;font-size:12px">提交评论</div>
<div class="a" style="left:561px;top:378px;width:55px;height:29px;background:#fff;border:1px solid #dcdfe6;border-radius:0 2px 2px 0"></div>
<div class="t c" style="left:588px;top:393px;font-size:12px;color:#606266">取消</div>
</body></html>
